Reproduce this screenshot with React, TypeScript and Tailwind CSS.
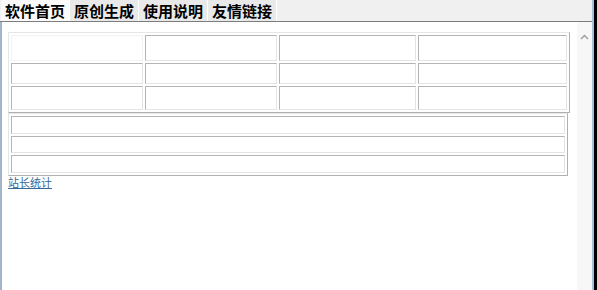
import React from "react";

const cellCls =
  "bg-white border border-t-[#b4b4b4] border-l-[#b4b4b4] border-r-[#e4e4e4] border-b-[#e4e4e4]";
const faintCls = "bg-white border border-[#f2f2f2]";

export default function App() {
  const tabs = ["软件首页", "原创生成", "使用说明", "友情链接"];
  const rows1 = [26, 21, 24];
  const cols1 = [132, 132, 137, 149];
  const rows2 = [18, 17, 18];
  return (
    <div
      className="flex h-[290px] w-[597px] bg-white overflow-hidden"
      style={{ fontFamily: '"Noto Sans CJK SC", "Noto Sans", sans-serif' }}
    >
      <div className="flex w-[592px] flex-col">
        <div className="flex h-[22px] shrink-0 items-stretch border-b border-[#7c7c7c] bg-[#f0f0f0] pl-[1px]">
          {tabs.map((t, i) => (
            <div
              key={t}
              className={`flex items-center border-r border-white px-[4px] text-[15px] font-bold leading-none text-black ${
                i === 0 ? "bg-[#fafafa]" : "bg-[#e9e9e9]"
              }`}
            >
              {t}
            </div>
          ))}
        </div>
        <div className="flex flex-1">
          <div className="w-[2px] bg-[#a3b6c9]" />
          <div className="flex-1 pl-[6px] pt-[10px]">
            <div className="flex w-[562px] flex-col gap-[2px] border border-t-[#e6e6e6] border-l-[#e6e6e6] border-r-[#b0b0b0] border-b-[#b0b0b0] p-[2px]">
              {rows1.map((h, r) => (
                <div key={r} className="flex gap-[2px]">
                  {cols1.map((w, c) => (
                    <div
                      key={c}
                      className={r === 0 && c === 0 ? faintCls : cellCls}
                      style={{ width: w, height: h }}
                    />
                  ))}
                </div>
              ))}
            </div>
            <div className="flex w-[560px] flex-col gap-[2px] border border-t-[#e6e6e6] border-l-[#e6e6e6] border-r-[#b0b0b0] border-b-[#b0b0b0] p-[2px]">
              {rows2.map((h, r) => (
                <div key={r} className={cellCls} style={{ height: h }} />
              ))}
            </div>
            <a
              href="#"
              className="block w-fit text-[11px] leading-[13px] text-[#35699a] underline"
            >
              站长统计
            </a>
          </div>
          <div className="flex w-[15px] justify-center bg-[#f7f7f7] pt-[12px]">
            <svg width="9" height="6" viewBox="0 0 9 6">
              <path d="M1 5 L4.5 1.5 L8 5" fill="none" stroke="#a0a0a0" strokeWidth="1.5" />
            </svg>
          </div>
        </div>
      </div>
      <div className="w-[2px] bg-[#a9c1d8]" />
      <div className="w-[3px] bg-black" />
    </div>
  );
}
